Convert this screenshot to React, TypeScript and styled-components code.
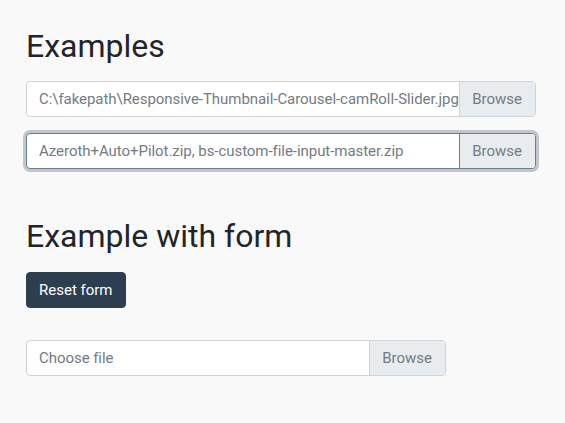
import React from 'react';
import styled, { createGlobalStyle } from 'styled-components';

const GlobalStyle = createGlobalStyle`
  html, body {
    margin: 0;
    padding: 0;
    background: #f9f9f9;
    font-family: Roboto, "Liberation Sans", Arial, sans-serif;
    color: #212529;
  }
`;

const Page = styled.div`
  padding: 27px 29px 26px 26px;
`;

const Section = styled.section`
  & + & {
    margin-top: 48px;
  }
`;

const Heading = styled.h2`
  margin: 0 0 16px;
  font-size: 32px;
  font-weight: 400;
  line-height: 1.2;
  color: #212529;
`;

const FieldWrap = styled.div<{ $width?: number }>`
  position: relative;
  display: flex;
  width: ${(p) => (p.$width ? `${p.$width}px` : '100%')};
  height: 36px;
  margin-bottom: 16px;
  box-sizing: border-box;
`;

const FieldLabel = styled.label<{ $focused?: boolean }>`
  display: flex;
  flex: 1;
  min-width: 0;
  box-sizing: border-box;
  background: #fff;
  border: 1px solid ${(p) => (p.$focused ? '#6c7d8f' : '#ced4da')};
  border-radius: 4px;
  box-shadow: ${(p) => (p.$focused ? '0 0 0 3px rgba(52, 70, 92, 0.28)' : 'none')};
  overflow: hidden;
  font-size: 15px;
  line-height: 34px;
  color: #737b82;
  cursor: pointer;
`;

const FileName = styled.span`
  flex: 1;
  min-width: 0;
  padding: 0 0 0 12px;
  white-space: nowrap;
  overflow: hidden;
  letter-spacing: -0.05px;
`;

const BrowseButton = styled.span<{ $focused?: boolean }>`
  flex: none;
  padding: 0 13px 0 12px;
  background: #e9ecef;
  border-left: 1px solid ${(p) => (p.$focused ? '#6c7d8f' : '#ced4da')};
  color: #737b82;
`;

const HiddenInput = styled.input`
  position: absolute;
  width: 0;
  height: 0;
  opacity: 0;
`;

const ResetButton = styled.button`
  display: block;
  height: 36px;
  padding: 0 12px;
  margin: 0 0 32px;
  border: 1px solid #2c3e50;
  border-radius: 4px;
  background: #2c3e50;
  color: #fff;
  font-family: inherit;
  font-size: 15px;
  line-height: 34px;
  cursor: pointer;
`;

type FileFieldProps = {
  id: string;
  value: string;
  focused?: boolean;
  width?: number;
};

function FileField({ id, value, focused, width }: FileFieldProps) {
  return (
    <FieldWrap $width={width}>
      <HiddenInput type="file" id={id} />
      <FieldLabel htmlFor={id} $focused={focused}>
        <FileName>{value}</FileName>
        <BrowseButton $focused={focused}>Browse</BrowseButton>
      </FieldLabel>
    </FieldWrap>
  );
}

export default function App() {
  return (
    <>
      <GlobalStyle />
      <Page>
        <Section>
          <Heading>Examples</Heading>
          <FileField
            id="file-one"
            value="C:\fakepath\Responsive-Thumbnail-Carousel-camRoll-Slider.jpg"
          />
          <FileField
            id="file-two"
            value="Azeroth+Auto+Pilot.zip, bs-custom-file-input-master.zip"
            focused
          />
        </Section>
        <Section>
          <Heading>Example with form</Heading>
          <form>
            <ResetButton type="reset">Reset form</ResetButton>
            <FileField id="file-three" value="Choose file" width={420} />
          </form>
        </Section>
      </Page>
    </>
  );
}
